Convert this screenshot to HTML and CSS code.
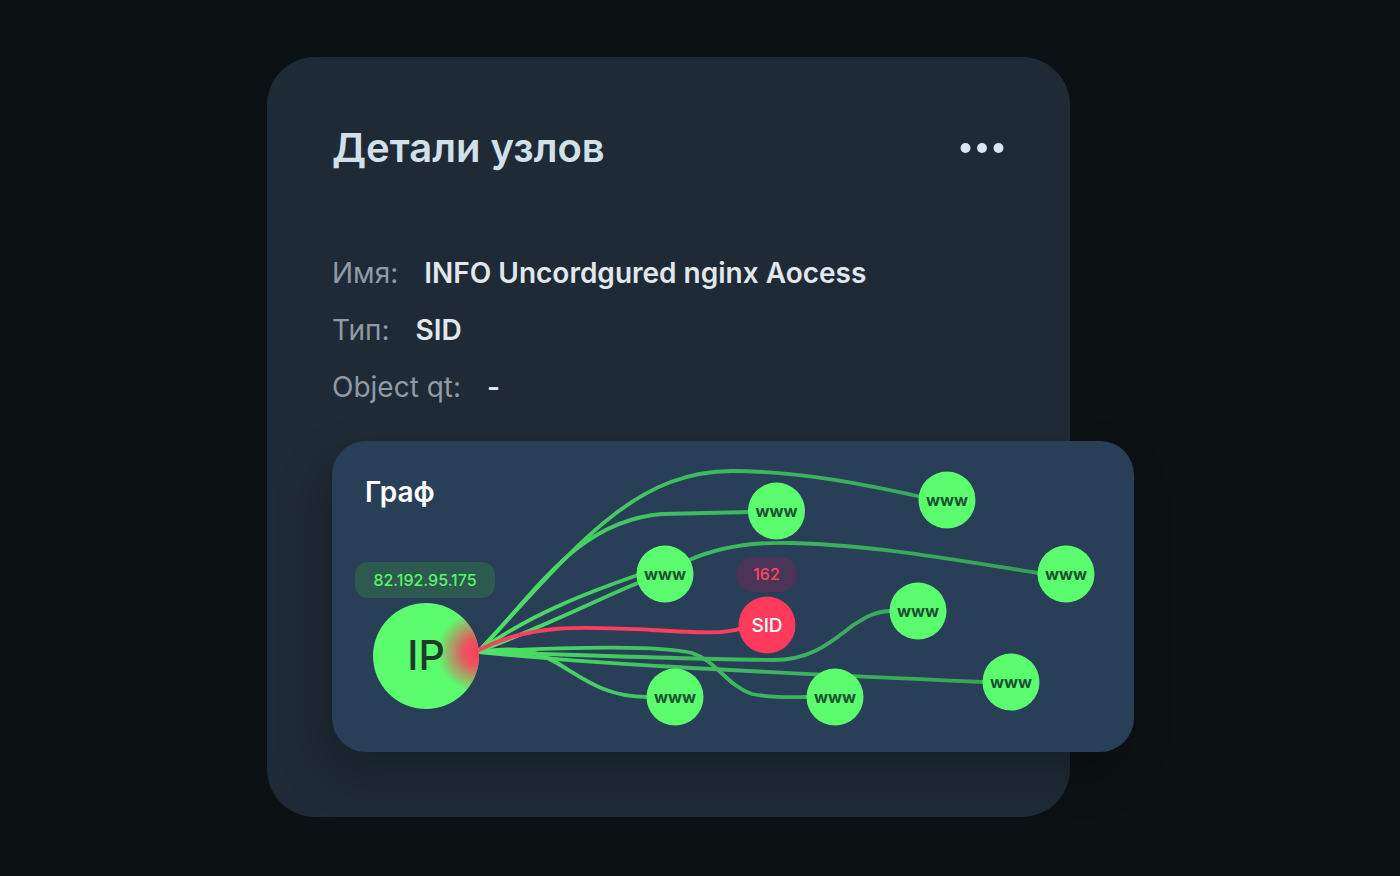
FILE: index.html
```html
<!DOCTYPE html>
<html lang="ru">
<head>
<meta charset="utf-8">
<title>Детали узлов</title>
<link rel="stylesheet" href="styles.css">
</head>
<body>
<div class="stage">
  <section class="card">
    <header class="card-head">
      <h1 class="title">Детали узлов</h1>
      <button class="more" aria-label="Ещё">
        <svg width="46" height="12" viewBox="0 0 46 12"><circle cx="6.5" cy="6" r="5"/><circle cx="23" cy="6" r="5"/><circle cx="39.5" cy="6" r="5"/></svg>
      </button>
    </header>
    <dl class="props">
      <div class="prop"><dt>Имя:</dt><dd>INFO Uncordgured nginx Aocess</dd></div>
      <div class="prop"><dt>Тип:</dt><dd>SID</dd></div>
      <div class="prop"><dt>Object qt:</dt><dd>-</dd></div>
    </dl>
    <div class="graph">
      <h2 class="graph-title">Граф</h2>
      <svg class="graph-svg" viewBox="0 0 802 311" width="802" height="311">
        <defs>
          <linearGradient id="edge" gradientUnits="userSpaceOnUse" x1="147" y1="0" x2="720" y2="0">
            <stop offset="0" stop-color="#52f468"/>
            <stop offset="0.35" stop-color="#40c860"/>
            <stop offset="1" stop-color="#37a65a"/>
          </linearGradient>
          <radialGradient id="glow" gradientUnits="userSpaceOnUse" cx="145" cy="211" r="40">
            <stop offset="0" stop-color="#ff3b5c" stop-opacity="1"/>
            <stop offset="0.35" stop-color="#ff3b5c" stop-opacity="0.85"/>
            <stop offset="1" stop-color="#ff3b5c" stop-opacity="0"/>
          </radialGradient>
          <clipPath id="ipclip"><circle cx="94" cy="215" r="53"/></clipPath>
        </defs>
        <g class="edges" fill="none" stroke="url(#edge)" stroke-width="3.8" stroke-linecap="round">
          <path d="M147,210 C240,110 300,30 400,30 C470,30 540,45 590,56"/>
          <path d="M147,210 C205,150 245,80 330,73 L420,71"/>
          <path d="M147,210 C200,172 260,150 306,134"/>
          <path d="M147,210 C212,186 262,160 308,141"/>
          <path d="M355,120 C390,104 430,101 460,102 C540,104 620,118 706,132"/>
          <path d="M147,211 C250,214 350,218 441,219 C480,219 500,200 520,185 C535,175 545,170 558,170"/>
          <path d="M147,211 C250,222 400,230 651,241"/>
          <path d="M147,211 C250,205 330,205 360,212 C385,220 395,245 420,253 C440,257 460,256 475,256"/>
          <path d="M147,211 C185,205 205,210 225,222 C255,240 275,256 315,256"/>
        </g>
        <path class="edge-red" d="M147,209 C200,181 260,186 320,189 C370,192 395,193 410,187"/>

        <rect class="pill-ip" x="23" y="121" width="140" height="36" rx="13"/>
        <text class="pill-ip-text" x="93" y="145">82.192.95.175</text>

        <circle class="node" cx="94" cy="215" r="53"/>
        <rect x="40" y="160" width="120" height="110" fill="url(#glow)" clip-path="url(#ipclip)"/>
        <text class="ip-text" x="94" y="229">IP</text>

        <rect class="pill-sid" x="404" y="116" width="61" height="35" rx="17"/>
        <text class="pill-sid-text" x="434.5" y="139">162</text>

        <circle class="node" cx="444.5" cy="70" r="28.5"/><text class="www" x="444.5" y="76">www</text>
        <circle class="node" cx="615" cy="59" r="28.5"/><text class="www" x="615" y="65">www</text>
        <circle class="node" cx="333" cy="133" r="28.5"/><text class="www" x="333" y="139">www</text>
        <circle class="node" cx="734" cy="133" r="28.5"/><text class="www" x="734" y="139">www</text>
        <circle class="node" cx="586" cy="170" r="28.5"/><text class="www" x="586" y="176">www</text>
        <circle class="node" cx="679" cy="241" r="28.5"/><text class="www" x="679" y="247">www</text>
        <circle class="node" cx="343" cy="256" r="28.5"/><text class="www" x="343" y="262">www</text>
        <circle class="node" cx="503" cy="256" r="28.5"/><text class="www" x="503" y="262">www</text>

        <circle class="node-sid" cx="435" cy="184" r="28.5"/>
        <text class="sid-text" x="435" y="191">SID</text>
      </svg>
    </div>
  </section>
</div>
</body>
</html>
```
FILE: styles.css
```css
* { box-sizing: border-box; }
html, body { margin: 0; padding: 0; }
body {
  background: #0c1114;
  font-family: Inter, "Noto Sans", "DejaVu Sans", sans-serif;
  width: 1400px;
  height: 876px;
  overflow: hidden;
}
.stage {
  padding: 57px 0 0 267px;
}
.card {
  width: 803px;
  background: #1e2a35;
  border-radius: 48px;
  padding: 68px 65px 65px;
}
.card-head {
  display: flex;
  align-items: center;
  justify-content: space-between;
}
.title {
  margin: 0;
  font-size: 40px;
  line-height: 46px;
  font-weight: 600;
  color: #d2e0ea;
}
.more {
  border: 0;
  background: none;
  padding: 0;
  display: flex;
  cursor: pointer;
}
.more svg { fill: #d8e8f4; display: block; }
.props {
  margin: 74px 0 0;
  padding: 0;
}
.prop {
  display: flex;
  gap: 26px;
  font-size: 28px;
  line-height: 57px;
}
.prop dt {
  color: #8e9ba6;
  font-weight: 400;
}
.prop dd {
  margin: 0;
  color: #e0e8ee;
  font-weight: 600;
}
.graph {
  position: relative;
  margin-top: 25px;
  width: 802px;
  height: 311px;
  background: #283f57;
  border-radius: 34px;
  padding: 34px 33px 0;
  box-shadow: -10px 22px 48px rgba(0, 0, 0, 0.22);
}
.graph-title {
  position: relative;
  z-index: 1;
  margin: 0;
  font-size: 28px;
  line-height: 34px;
  font-weight: 600;
  color: #ffffff;
}
.graph-svg {
  position: absolute;
  left: 0;
  top: 0;
  display: block;
}
.edges { opacity: 0.92; }
.edge-red {
  fill: none;
  stroke: #ff3d5e;
  stroke-width: 3.8;
  stroke-linecap: round;
}
.node { fill: #5cfc6f; }
.node-sid { fill: #ff3a5c; }
.pill-ip { fill: #2c5a4e; }
.pill-ip-text {
  fill: #5cf36d;
  font-size: 16px;
  font-weight: 500;
  text-anchor: middle;
  font-family: Inter, sans-serif;
}
.pill-sid { fill: #4b3455; }
.pill-sid-text {
  fill: #ff4467;
  font-size: 16px;
  font-weight: 500;
  text-anchor: middle;
  font-family: Inter, sans-serif;
}
.ip-text {
  fill: #1c3b2a;
  font-size: 41px;
  font-weight: 500;
  text-anchor: middle;
  font-family: Inter, sans-serif;
}
.www {
  fill: #1c5232;
  font-size: 16.5px;
  font-weight: 700;
  text-anchor: middle;
  font-family: Inter, sans-serif;
}
.sid-text {
  fill: #ffffff;
  font-size: 19px;
  font-weight: 500;
  text-anchor: middle;
  font-family: Inter, sans-serif;
}
```
